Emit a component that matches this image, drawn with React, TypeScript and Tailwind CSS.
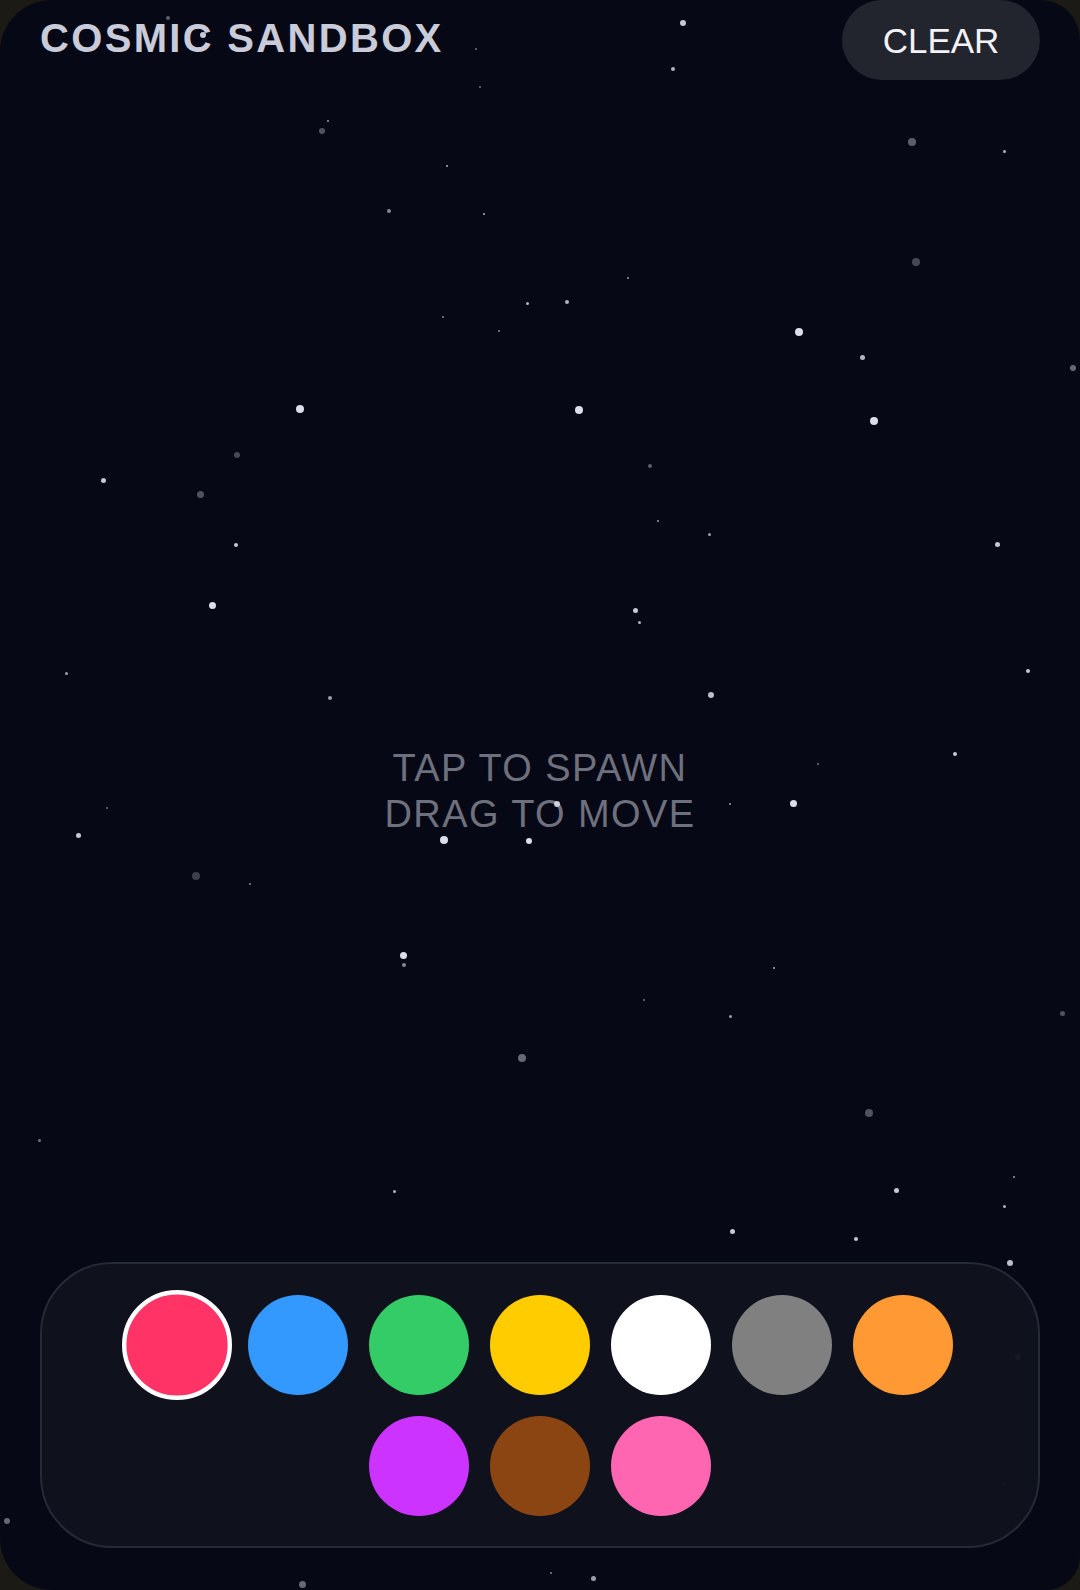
import React from 'react';

// star field, coords measured on a 1065px-wide view, scaled up to 1080
type Star = [number, number, number, number];

const STARS: Star[] = [
  // bright
  [296, 403, 8, 1], [571, 404, 8, 1], [788, 327, 8, 1], [862, 415, 8, 1],
  [210, 597, 7, 1], [398, 942, 7, 1], [438, 828, 8, 1], [522, 829, 6, 1],
  [782, 792, 7, 1], [674, 23, 6, 0.9], [549, 793, 6, 0.9], [200, 35, 6, 0.9],
  // medium
  [102, 474, 5, 0.9], [233, 537, 4, 0.9], [627, 602, 5, 0.9], [701, 685, 6, 0.85],
  [984, 537, 5, 0.9], [1014, 662, 4, 0.9], [942, 744, 4, 0.9], [77, 824, 5, 0.9],
  [66, 664, 3, 0.7], [325, 688, 4, 0.7], [884, 1174, 5, 0.9], [722, 1214, 5, 0.9],
  [844, 1222, 4, 0.9], [996, 1245, 6, 0.85], [991, 1190, 3, 0.8], [664, 68, 4, 0.8],
  [559, 298, 4, 0.8], [520, 299, 3, 0.8], [851, 353, 5, 0.8], [991, 149, 3, 0.8],
  [398, 952, 4, 0.6], [631, 614, 3, 0.8], [720, 1002, 3, 0.7], [585, 1557, 5, 0.7],
  // dim
  [1058, 363, 6, 0.45], [166, 18, 4, 0.4], [641, 460, 4, 0.4], [234, 449, 6, 0.3],
  [198, 488, 7, 0.35], [318, 129, 6, 0.35], [899, 140, 8, 0.4], [903, 258, 8, 0.3],
  [193, 864, 8, 0.25], [515, 1043, 8, 0.45], [857, 1098, 8, 0.35], [1048, 999, 5, 0.35],
  [1004, 1338, 6, 0.3], [7, 1500, 6, 0.45], [298, 1562, 7, 0.45], [990, 1464, 4, 0.15],
  // tiny
  [441, 164, 2, 0.8], [477, 211, 2, 0.8], [384, 208, 4, 0.6], [437, 313, 2, 0.6],
  [492, 326, 2, 0.6], [619, 274, 2, 0.7], [649, 514, 2, 0.7], [700, 527, 3, 0.7],
  [807, 753, 2, 0.5], [720, 793, 2, 0.7], [106, 797, 2, 0.5], [247, 872, 2, 0.6],
  [763, 955, 2, 0.8], [635, 986, 2, 0.5], [389, 1175, 3, 0.8], [1000, 1161, 2, 0.7],
  [39, 1125, 3, 0.5], [469, 48, 2, 0.5], [473, 86, 2, 0.5], [323, 119, 2, 0.7],
  [543, 1551, 2, 0.6],
];

const COLORS = [
  '#ff3366', '#3399ff', '#33cc66', '#ffcc00', '#ffffff',
  '#808080', '#ff9933', '#cc33ff', '#8b4513', '#ff66b2',
];

const SCALE = 1080 / 1065;

const Starfield: React.FC = () => (
  <div className="pointer-events-none absolute inset-0">
    {STARS.map(([x, y, s, o], i) => (
      <span
        key={i}
        className="absolute rounded-full bg-[#dcdeea]"
        style={{
          left: x * SCALE - s / 2,
          top: y * SCALE - s / 2,
          width: s,
          height: s,
          opacity: o,
        }}
      />
    ))}
  </div>
);

const ColorSwatch: React.FC<{ color: string; selected: boolean }> = ({ color, selected }) => (
  <button
    className={`h-[100px] w-[100px] rounded-full ${selected ? 'scale-110 border-4 border-white' : ''}`}
    style={{ backgroundColor: color }}
  />
);

export default function App() {
  return (
    <div className="h-[1590px] w-[1080px] overflow-hidden bg-[#1b1a14] font-['Liberation_Sans',Arial,sans-serif]">
      <div className="relative flex h-full w-full flex-col rounded-tl-[52px] rounded-bl-[52px] rounded-tr-[40px] rounded-br-[34px] bg-[#060816]">
        {/* hint over the canvas */}
        <div className="pointer-events-none absolute inset-0 flex items-center justify-center pb-[7px]">
          <p className="text-center text-[38px] leading-[1.2] tracking-[0.037em] text-[#6e717d]">
            TAP TO SPAWN
            <br />
            DRAG TO MOVE
          </p>
        </div>

        <div className="flex items-start justify-between px-10">
          <h1 className="mt-[18px] text-[40px] font-bold leading-none tracking-[0.058em] text-[#c9cbd8]">
            COSMIC SANDBOX
          </h1>
          <button className="h-[80px] w-[198px] rounded-full bg-[#22242e] text-[35px] leading-none text-[#f2f2f7]">
            CLEAR
          </button>
        </div>

        <Starfield />

        <div className="flex-1" />

        <div className="relative z-10 mx-10 mb-[42px] flex h-[286px] flex-wrap content-start justify-center gap-[21px] rounded-[72px] border-2 border-[#262a36] bg-[#11141e]/90 px-8 pt-[31px]">
          {COLORS.map((c, i) => (
            <ColorSwatch key={c} color={c} selected={i === 0} />
          ))}
        </div>
      </div>
    </div>
  );
}
